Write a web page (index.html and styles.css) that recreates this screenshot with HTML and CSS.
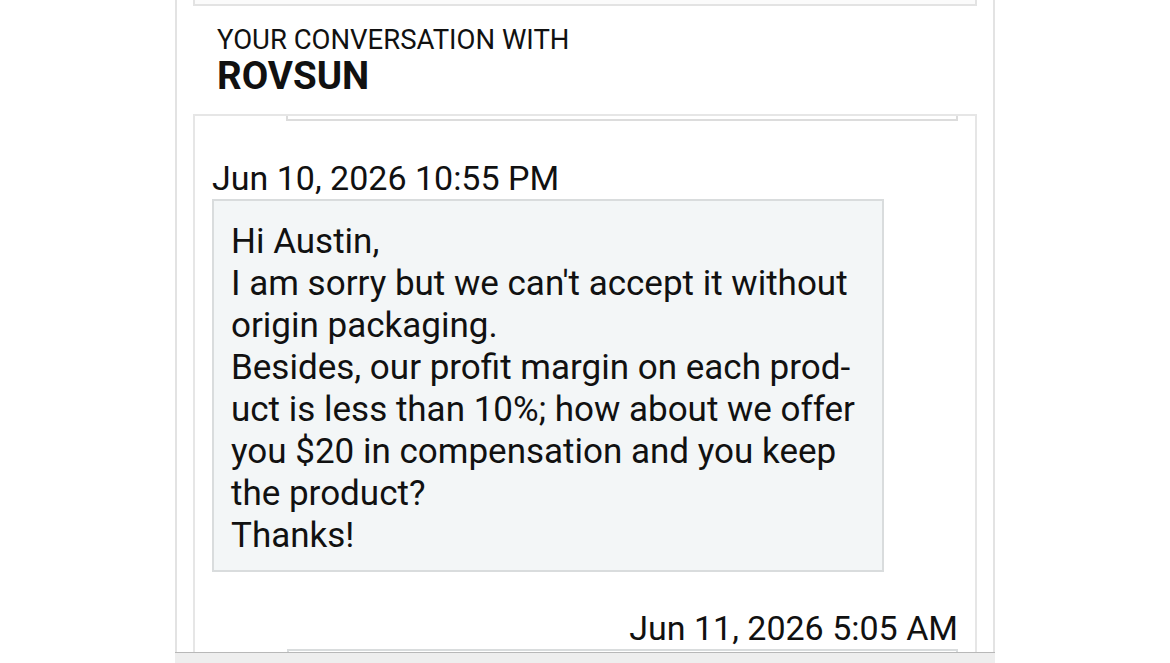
FILE: index.html
```html
<!DOCTYPE html>
<html lang="en">
<head>
<meta charset="utf-8">
<title>Conversation with ROVSUN</title>
<link rel="stylesheet" href="styles.css">
</head>
<body>
<div class="page">
  <div class="panel">
    <div class="prev-card"></div>
    <div class="heading">
      <div class="heading-label">YOUR CONVERSATION WITH</div>
      <div class="heading-name">ROVSUN</div>
    </div>
    <div class="thread">
      <div class="sent-tail"></div>
      <div class="msg received">
        <div class="stamp">Jun 10, 2026 10:55 PM</div>
        <div class="bubble">Hi Austin,<br>I am sorry but we can't accept it without origin packaging.<br>Besides, our profit margin on each prod&shy;uct is less than 10%; how about we offer you $20 in compensation and you keep the product?<br>Thanks!</div>
      </div>
      <div class="msg sent">
        <div class="stamp">Jun 11, 2026 5:05 AM</div>
        <div class="bubble sent-bubble"></div>
      </div>
    </div>
  </div>
  <div class="footer"></div>
</div>
</body>
</html>
```

FILE: styles.css
```css
html, body {
  margin: 0;
  padding: 0;
  background: #ffffff;
}

body {
  font-family: Roboto, "Liberation Sans", Arial, sans-serif;
  color: #111111;
}

.page {
  margin-left: 175px;
  width: 820px;
  height: 663px;
  display: flex;
  flex-direction: column;
  overflow: hidden;
}

.panel {
  flex: 1;
  min-height: 0;
  overflow: hidden;
  border-left: 2px solid #e3e3e3;
  border-right: 2px solid #e3e3e3;
  padding: 0 16px;
  box-sizing: border-box;
}

.prev-card {
  height: 4px;
  border: 2px solid #e3e3e3;
  border-top: none;
  background: #fbfbfb;
}

.heading {
  height: 108px;
  box-sizing: border-box;
  padding: 19px 0 0 24px;
}

.heading-label {
  font-size: 27.5px;
  line-height: 30px;
}

.heading-name {
  font-size: 38.5px;
  font-weight: 700;
  line-height: 42px;
}

.thread {
  border: 2px solid #e6e6e6;
  border-bottom: none;
  height: 560px;
  box-sizing: border-box;
  padding: 0 17px;
}

.sent-tail {
  height: 3px;
  margin-left: 74px;
  border: 2px solid #dcdcdc;
  border-top: none;
}

.msg {
  display: flex;
  flex-direction: column;
}

.msg.received {
  align-items: flex-start;
  padding-top: 39px;
}

.msg.sent {
  align-items: flex-end;
  padding-top: 38px;
}

.stamp {
  font-size: 34px;
  line-height: 36px;
}

.bubble {
  width: 672px;
  box-sizing: border-box;
  margin-top: 3px;
  padding: 20px 20px 13px 17px;
  background: #f3f6f7;
  border: 2px solid #d9dcdd;
  font-size: 35px;
  line-height: 42px;
  hyphens: manual;
}

.sent-bubble {
  width: 671px;
  height: 40px;
  background: #ffffff;
}

.footer {
  height: 10px;
  border-top: 1px solid #b8b8b8;
  background: #eeeeee;
}
```
